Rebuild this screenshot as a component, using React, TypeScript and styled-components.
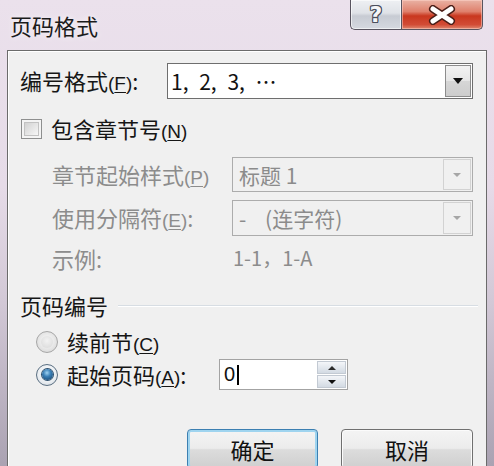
import React from "react";
import styled, { createGlobalStyle, css } from "styled-components";

const FONT = `"Noto Sans CJK SC", "Noto Sans", sans-serif`;
const LATIN = `"Liberation Sans", "Noto Sans CJK SC", sans-serif`;

const Global = createGlobalStyle`
  html, body { margin: 0; padding: 0; background: #e4d9e6; }
  body { width: 494px; height: 466px; overflow: hidden; font-family: ${FONT}; }
  #root { width: 494px; height: 466px; }
`;

const Window = styled.div`
  width: 494px;
  height: 466px;
  box-sizing: border-box;
  display: flex;
  flex-direction: column;
  overflow: hidden;
  background: linear-gradient(to bottom, #ebe1ec 0%, #e6dbe8 40%, #d2c8d6 65%, #aaa2b2 100%);
  font-family: ${FONT};
  color: #151515;
`;

const TitleBar = styled.div`
  flex: none;
  height: 50px;
  display: flex;
  justify-content: space-between;
  align-items: flex-start;
`;

const Title = styled.div`
  margin: 10px 0 0 10px;
  font-size: 22px;
  line-height: 30px;
  color: #1b1b1b;
  text-shadow: 0 0 6px rgba(255, 255, 255, 0.9);
`;

const Caption = styled.div`
  display: flex;
  margin-right: 11px;
`;

const CapBtn = styled.div<{ $kind: "help" | "close" }>`
  height: 30px;
  box-sizing: border-box;
  display: flex;
  align-items: center;
  justify-content: center;
  border: 1px solid #58545f;
  border-top: none;
  ${(p) =>
    p.$kind === "help"
      ? css`
          width: 51px;
          border-right: none;
          border-bottom-left-radius: 5px;
          background: linear-gradient(to bottom, #eef0f3 0%, #dfe2e7 45%, #c7cbd3 55%, #d5d9e0 100%);
          box-shadow: inset 0 0 0 1px rgba(255, 255, 255, 0.6);
        `
      : css`
          width: 82px;
          border-bottom-right-radius: 5px;
          background: linear-gradient(to bottom, #e9b2a4 0%, #df806c 40%, #c9371f 55%, #d24c36 85%, #df8870 100%);
          box-shadow: inset 0 0 0 1px rgba(255, 215, 205, 0.5);
        `}
`;

const HelpGlyph = styled.span`
  font-family: "DejaVu Sans", sans-serif;
  font-weight: bold;
  font-size: 22px;
  line-height: 1;
  color: #f6f6f8;
  text-shadow: -1px 0 #4b4f5c, 1px 0 #4b4f5c, 0 -1px #4b4f5c, 0 1px #4b4f5c, 1px 1px #4b4f5c, -1px -1px #4b4f5c,
    1px -1px #4b4f5c, -1px 1px #4b4f5c;
`;

const Client = styled.div`
  flex: 1;
  margin: 0 7px;
  border: 1px solid #6b6b6b;
  border-bottom: none;
  background: #f0f0f0;
  padding: 12px 13px 0 12px;
  display: flex;
  flex-direction: column;
  box-shadow: inset 1px 1px 0 #ffffff;
  font-size: 22px;
`;

const FieldRow = styled.div<{ $indent?: number; $label: number; $h: number; $mt: number }>`
  display: grid;
  grid-template-columns: ${(p) => p.$label}px 1fr;
  align-items: center;
  height: ${(p) => p.$h}px;
  margin-top: ${(p) => p.$mt}px;
  padding-left: ${(p) => p.$indent ?? 0}px;
  flex: none;
`;

const Label = styled.div<{ $disabled?: boolean }>`
  white-space: nowrap;
  line-height: 1;
  color: ${(p) => (p.$disabled ? "#8c8c8c" : "#161616")};
`;

const Mn = styled.span`
  font-family: ${LATIN};
  font-size: 19px;
  & u {
    text-underline-offset: 2px;
  }
`;

const Combo = styled.div<{ $disabled?: boolean }>`
  height: 100%;
  box-sizing: border-box;
  display: flex;
  align-items: stretch;
  padding: 1px;
  border: 1px solid ${(p) => (p.$disabled ? "#acacac" : "#6e6e6e")};
  background: ${(p) => (p.$disabled ? "#f0f0f0" : "#ffffff")};
  color: ${(p) => (p.$disabled ? "#8b8b8b" : "#111111")};
`;

const ComboText = styled.div<{ $pad: number }>`
  flex: 1;
  display: flex;
  align-items: center;
  padding-left: ${(p) => p.$pad}px;
  font-size: 21px;
  white-space: pre;
`;

const Nums = styled.span`
  word-spacing: 6px;
`;

const ComboArrow = styled.div<{ $disabled?: boolean }>`
  box-sizing: border-box;
  display: flex;
  align-items: center;
  justify-content: center;
  ${(p) =>
    p.$disabled
      ? css`
          width: 28px;
          border: 1px solid #d2d2d2;
          background: #f0f0f0;
        `
      : css`
          width: 26px;
          border: 1px solid #8d8d8d;
          background: linear-gradient(to bottom, #f3f3f3 0%, #e6e6e6 50%, #d6d6d6 51%, #cdcdcd 100%);
        `}
`;

const Tri = styled.span<{ $disabled?: boolean; $up?: boolean; $size?: number }>`
  width: 0;
  height: 0;
  border-left: ${(p) => p.$size ?? 5}px solid transparent;
  border-right: ${(p) => p.$size ?? 5}px solid transparent;
  ${(p) =>
    p.$up
      ? css`border-bottom: ${Math.round((p.$size ?? 5) * 1.1)}px solid ${p.$disabled ? "#a6a6a6" : "#2b2b2b"};`
      : css`border-top: ${Math.round((p.$size ?? 5) * 1.1)}px solid ${p.$disabled ? "#a6a6a6" : "#111111"};`}
`;

const CheckRow = styled.div`
  display: flex;
  align-items: center;
  gap: 9px;
  height: 20px;
  margin-top: 20px;
  padding-left: 1px;
  flex: none;
`;

const CheckBox = styled.div`
  width: 21px;
  height: 20px;
  box-sizing: border-box;
  border: 1px solid #8e8f8f;
  padding: 2px;
  background: #f4f4f4;
  &::after {
    content: "";
    display: block;
    width: 100%;
    height: 100%;
    box-sizing: border-box;
    border: 1px solid #c2c2c2;
    background: linear-gradient(135deg, #d2d2d2 0%, #e6e6e6 55%, #f7f7f7 100%);
  }
`;

const ExampleValue = styled.div`
  color: #8c8c8c;
  font-size: 20px;
  padding-left: 1px;
`;

const GroupHeader = styled.div`
  display: flex;
  align-items: center;
  gap: 10px;
  height: 24px;
  margin-top: 26px;
  margin-right: -5px;
  flex: none;
`;

const GroupLine = styled.div`
  flex: 1;
  height: 1px;
  background: #d7dde3;
  box-shadow: 0 1px 0 #ffffff;
`;

const RadioRow = styled.div<{ $h: number; $mt: number }>`
  display: flex;
  align-items: center;
  padding-left: 16px;
  height: ${(p) => p.$h}px;
  margin-top: ${(p) => p.$mt}px;
  flex: none;
`;

const Radio = styled.div<{ $checked?: boolean }>`
  width: 22px;
  height: 22px;
  box-sizing: border-box;
  border-radius: 50%;
  margin-right: 9px;
  display: flex;
  align-items: center;
  justify-content: center;
  flex: none;
  ${(p) =>
    p.$checked
      ? css`
          border: 1px solid #5b6f82;
          background: radial-gradient(circle at 50% 40%, #ffffff 0%, #e9edf1 60%, #c9d0d8 100%);
          &::after {
            content: "";
            width: 11px;
            height: 11px;
            border-radius: 50%;
            background: radial-gradient(circle at 45% 35%, #9fd3f2 0%, #3a7fb6 40%, #123c63 100%);
            box-shadow: 0 0 0 1px #2b4d6b;
          }
        `
      : css`
          border: 1px solid #a7a7a7;
          background: radial-gradient(circle at 50% 45%, #fbfbfb 0%, #e6e6e6 55%, #cfcfcf 100%);
          &::after {
            content: "";
            width: 12px;
            height: 12px;
            border-radius: 50%;
            background: radial-gradient(circle at 50% 40%, #f2f2f2 0%, #d8d8d8 100%);
          }
        `}
`;

const RadioLabel = styled.div<{ $w?: number }>`
  white-space: nowrap;
  line-height: 1;
  ${(p) => (p.$w ? css`width: ${p.$w}px; flex: none;` : "")}
`;

const Spin = styled.div`
  width: 129px;
  height: 31px;
  box-sizing: border-box;
  border: 1px solid #a3a3a3;
  background: #ffffff;
  display: flex;
  padding: 1px;
`;

const SpinText = styled.div`
  flex: 1;
  display: flex;
  align-items: center;
  padding-left: 3px;
  font-family: ${LATIN};
  font-size: 20px;
  color: #111;
`;

const Caret = styled.span`
  display: inline-block;
  width: 2px;
  height: 20px;
  margin-left: 2px;
  background: #000;
`;

const SpinButtons = styled.div`
  width: 29px;
  display: flex;
  flex-direction: column;
  gap: 1px;
`;

const SpinHalf = styled.div`
  flex: 1;
  box-sizing: border-box;
  border: 1px solid #c3cad3;
  display: flex;
  align-items: center;
  justify-content: center;
  background: linear-gradient(to bottom, #f4f6f9 0%, #e3e8ee 50%, #d3dae3 100%);
`;

const ButtonRow = styled.div`
  display: flex;
  justify-content: flex-end;
  gap: 23px;
  height: 40px;
  margin-top: 39px;
  flex: none;
`;

const Button = styled.div<{ $default?: boolean; $w: number }>`
  width: ${(p) => p.$w}px;
  height: 40px;
  box-sizing: border-box;
  border-radius: 4px;
  display: flex;
  align-items: center;
  justify-content: center;
  font-size: 22px;
  color: #111;
  background: linear-gradient(to bottom, #f4f4f4 0%, #ececec 48%, #dcdcdc 52%, #cfcfcf 100%);
  ${(p) =>
    p.$default
      ? css`
          border: 1px solid #3c7fb1;
          box-shadow: inset 0 0 0 2px #9fd4ef;
        `
      : css`
          border: 1px solid #707070;
          box-shadow: inset 0 0 0 1px #fbfbfb;
        `}
`;

export default function App() {
  return (
    <>
      <Global />
      <Window>
        <TitleBar>
          <Title>页码格式</Title>
          <Caption>
            <CapBtn $kind="help">
              <HelpGlyph>?</HelpGlyph>
            </CapBtn>
            <CapBtn $kind="close">
              <svg width="28" height="20" viewBox="0 0 28 20">
                <path d="M5 4 L23 16 M23 4 L5 16" stroke="#4a1e18" strokeWidth="8" strokeLinecap="round" />
                <path d="M5 4 L23 16 M23 4 L5 16" stroke="#ffffff" strokeWidth="5" strokeLinecap="round" />
              </svg>
            </CapBtn>
          </Caption>
        </TitleBar>

        <Client>
          <FieldRow $label={147} $h={36} $mt={0}>
            <Label>
              编号格式<Mn>(<u>F</u>)</Mn>:
            </Label>
            <Combo>
              <ComboText $pad={2}>
                <Nums>1, 2, 3, ⋯</Nums>
              </ComboText>
              <ComboArrow>
                <Tri />
              </ComboArrow>
            </Combo>
          </FieldRow>

          <CheckRow>
            <CheckBox />
            <Label>
              包含章节号<Mn>(<u>N</u>)</Mn>
            </Label>
          </CheckRow>

          <FieldRow $indent={32} $label={180} $h={35} $mt={18}>
            <Label $disabled>
              章节起始样式<Mn>(<u>P</u>)</Mn>
            </Label>
            <Combo $disabled>
              <ComboText $pad={5}>标题 1</ComboText>
              <ComboArrow $disabled>
                <Tri $disabled $size={4} />
              </ComboArrow>
            </Combo>
          </FieldRow>

          <FieldRow $indent={32} $label={180} $h={36} $mt={8}>
            <Label $disabled>
              使用分隔符<Mn>(<u>E</u>)</Mn>:
            </Label>
            <Combo $disabled>
              <ComboText $pad={5}>-    (连字符)</ComboText>
              <ComboArrow $disabled>
                <Tri $disabled $size={4} />
              </ComboArrow>
            </Combo>
          </FieldRow>

          <FieldRow $indent={32} $label={180} $h={24} $mt={7}>
            <Label $disabled>示例:</Label>
            <ExampleValue>1-1，1-A</ExampleValue>
          </FieldRow>

          <GroupHeader>
            <Label>页码编号</Label>
            <GroupLine />
          </GroupHeader>

          <RadioRow $h={22} $mt={14}>
            <Radio />
            <RadioLabel>
              续前节<Mn>(<u>C</u>)</Mn>
            </RadioLabel>
          </RadioRow>

          <RadioRow $h={31} $mt={6}>
            <Radio $checked />
            <RadioLabel $w={152}>
              起始页码<Mn>(<u>A</u>)</Mn>:
            </RadioLabel>
            <Spin>
              <SpinText>
                0<Caret />
              </SpinText>
              <SpinButtons>
                <SpinHalf>
                  <Tri $up $size={4} />
                </SpinHalf>
                <SpinHalf>
                  <Tri $size={4} />
                </SpinHalf>
              </SpinButtons>
            </Spin>
          </RadioRow>

          <ButtonRow>
            <Button $default $w={131}>确定</Button>
            <Button $w={132}>取消</Button>
          </ButtonRow>
        </Client>
      </Window>
    </>
  );
}
